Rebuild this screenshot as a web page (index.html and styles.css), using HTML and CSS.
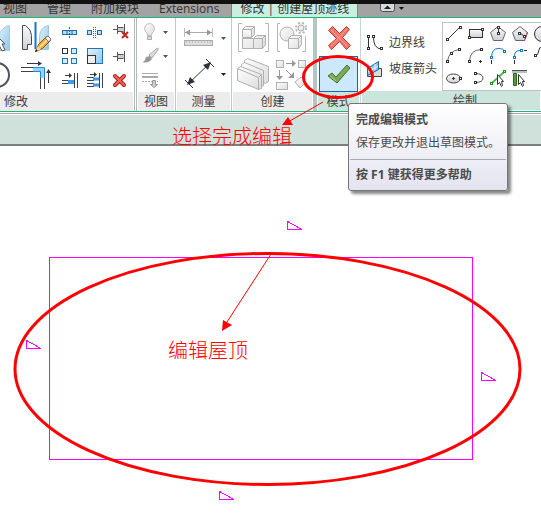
FILE: index.html
```html
<!DOCTYPE html>
<html lang="zh-CN">
<head>
<meta charset="utf-8">
<title>创建屋顶迹线</title>
<link rel="stylesheet" href="styles.css">
</head>
<body>
<svg class="defs" width="0" height="0" aria-hidden="true">
  <defs>
    <linearGradient id="grey" x1="0" y1="0" x2="1" y2="1"><stop offset="0" stop-color="#fff"/><stop offset="1" stop-color="#dcdcdc"/></linearGradient>
    <linearGradient id="blue" x1="0" y1="0" x2="1" y2="1"><stop offset="0" stop-color="#e4f3fc"/><stop offset="1" stop-color="#8fc6ea"/></linearGradient>
    <linearGradient id="steel" x1="0" y1="0" x2="0" y2="1"><stop offset="0" stop-color="#fafafa"/><stop offset="1" stop-color="#cdd0d6"/></linearGradient>
  </defs>
</svg>
<nav class="tabs">
  <a href="#view">视图</a>
  <a href="#manage">管理</a>
  <a href="#addins">附加模块</a>
  <a href="#ext">Extensions</a>
  <a href="#modify" class="active">修改 | 创建屋顶迹线</a>
  <button class="collapse" aria-label="最小化功能区">
    <svg width="24" height="12"><rect x="0.5" y="-3.500" width="14" height="11" rx="2" fill="#d8dadd" stroke="#4b4f58"/><path d="M4 5h7L7.500 1.500z" fill="#222"/><path d="M19 3h5l-2.500 3z" fill="#111"/></svg>
  </button>
</nav>

<div class="ribbon">
  <section class="panel modify">
    <div class="tools">
      <div class="halves cut">
        <button aria-label="镜像 - 拾取轴"><svg width="12" height="36"><path d="M-2 16Q3 6 9.500 5.500v25H-2z" fill="url(#blue)" stroke="#a8cbe2"/><path d="M-3 16L5 24H2l3 6-3 1-3-6-2 2z" fill="#fff" stroke="#555"/></svg></button>
        <button aria-label="旋转"><svg width="12" height="36"><circle cx="-3" cy="19" r="12" fill="none" stroke="#4d525c" stroke-width="2"/></svg></button>
      </div>
      <div class="halves wide">
        <button aria-label="镜像 - 绘制轴"><svg width="45" height="36"><path d="M10.500 5.500h3q6 4 6 10v9h-4v5h-5z" fill="url(#steel)" stroke="#444a55"/><path d="M36.500 5.500q-9 2-9 12v12h9z" fill="url(#blue)" stroke="#9cc5e0"/><path d="M23.500 2v27" stroke="#1673c5" stroke-width="2"/><path d="M23.500 31.500l3-7 8-8 4 4-8 8z" fill="#f5a52a" stroke="#91551a"/><path d="M28 27l8-8" stroke="#ffe18c" stroke-width="2"/><path d="M33 18l3-2 3 3-2 3z" fill="#eee" stroke="#777"/><path d="M23 32l3-6 3 3z" fill="#f4d7a8"/><path d="M23 32l1-3 2 2z" fill="#222"/></svg></button>
        <button aria-label="修剪/延伸为角"><svg width="45" height="36"><path d="M9 11.500h12M9 15.500h12M28.500 22v11M32.500 22v11" stroke="#3d434e"/><path d="M21 13.500h9.500V22" fill="none" stroke="#9bd0fb" stroke-width="4"/><path d="M21 11.500h11.500V22M21 15.500h7.500V22" fill="none" stroke="#2388e0"/><path d="M15 7.500h12M36.500 27V15" stroke="#333a46"/><path d="M26 5l4 2.500-4 2.500zM34 17l2.500-4 2.500 4z" fill="#333a46"/></svg></button>
      </div>
      <div class="thirds three">
        <button aria-label="拆分图元"><svg width="25" height="24"><rect x="5.500" y="10.500" width="14" height="4" fill="#b8e0f8" stroke="#1d6baa"/><path d="M10 10v5M15 10v5" stroke="#1d6baa"/><path d="M12.500 7v11" stroke="#d22" stroke-dasharray="2 1"/></svg></button>
        <button aria-label="用间隙拆分"><svg width="25" height="24"><rect x="5.500" y="10.500" width="4" height="4" fill="#b8e0f8" stroke="#1d6baa"/><rect x="15.500" y="10.500" width="4" height="4" fill="#b8e0f8" stroke="#1d6baa"/><path d="M11.500 7v11M13.500 7v11" stroke="#d22" stroke-dasharray="1 1"/></svg></button>
        <button aria-label="解锁"><svg width="25" height="24"><path d="M6 9.500h4M10.500 5v9M10.500 7.500h6M10.500 11.500h6M17.500 4v10" fill="none" stroke="#555"/><path d="M11 8h6v3h-6z" fill="#ccc"/><path d="M15 12l6 6M21 12l-6 6" stroke="#c9201c" stroke-width="2"/></svg></button>
        <button aria-label="阵列"><svg width="25" height="24" stroke="#1f76b6"><rect x="5.500" y="4.500" width="5" height="5" fill="#fff" stroke="#333"/><rect x="14.500" y="4.500" width="5" height="5" fill="#d3ebfa"/><rect x="5.500" y="14.500" width="5" height="5" fill="#d3ebfa"/><rect x="14.500" y="14.500" width="5" height="5" fill="#d3ebfa"/></svg></button>
        <button aria-label="缩放"><svg width="25" height="24"><rect x="5.500" y="4.500" width="15" height="15" fill="url(#blue)" stroke="#1f76b6"/><rect x="5.500" y="11.500" width="8" height="8" fill="#eee" stroke="#333"/></svg></button>
        <button aria-label="锁定"><svg width="25" height="24"><path d="M6 12.500h4M10.500 8v9M10.500 10.500h6M10.500 14.500h6M17.500 7v11" fill="none" stroke="#555"/><path d="M11 11h6v3h-6z" fill="#ccc"/></svg></button>
        <button aria-label="修剪单个图元"><svg width="25" height="24"><path d="M5 12.500h7M5 15.500h7M17.500 5v15M20.500 5v15M8 7.500h6" stroke="#3d434e"/><path d="M12 5l3 2.500-3 2.500z" fill="#333"/><path d="M11 14h6" stroke="#3b9cf0" stroke-width="4"/></svg></button>
        <button aria-label="修剪多个图元"><svg width="25" height="24"><path d="M5 9.500h7M5 12.500h7M5 15.500h7M5 18.500h7M17.500 5v15M20.500 5v15M8 6.500h6" stroke="#3d434e"/><path d="M12 4l3 2.500-3 2.500z" fill="#333"/><path d="M11 11h6M11 17h6" stroke="#3b9cf0" stroke-width="3"/></svg></button>
        <button aria-label="删除"><svg width="25" height="24"><path d="M8 8l9 9M17 8l-9 9" stroke="#a91f1c" stroke-width="4" stroke-linecap="round"/><path d="M8 8l9 9M17 8l-9 9" stroke="#ee6258" stroke-width="2" stroke-linecap="round"/></svg></button>
      </div>
    </div>
    <h2 class="start">修改</h2>
  </section>

  <section class="panel view">
    <div class="tools">
      <div class="thirds one">
        <button aria-label="隐藏图元"><svg width="36" height="24"><path d="M10.500 15.500q0-3-2-4-2-3 0-6 4-4 8 0 2 3 0 6-2 1-2 4z" fill="url(#grey)" stroke="#bbb"/><path d="M10.500 16.500h4v3h-4z" fill="#ddd" stroke="#aaa"/><path d="M26 11h5l-2.500 3z" fill="#555"/></svg></button>
        <button aria-label="替换图形"><svg width="36" height="24"><path d="M5 18q3 0 4-5l4-1 2 3q-4 5-10 3z" fill="#999"/><path d="M12 11l7-6 2-1v2l-6 8z" fill="#ddd" stroke="#aaa"/><path d="M26 11h5l-2.500 3z" fill="#555"/></svg></button>
        <button aria-label="线处理"><svg width="36" height="24"><path d="M5 5.500h16" stroke="#aaa"/><path d="M5 9h16" stroke="#aaa" stroke-width="2"/><path d="M5 13.500h16" stroke="#aaa" stroke-dasharray="2 1"/><path d="M15.500 12.500h3v4h2l-3.500 3-3.500-3h2z" fill="#ccc" stroke="#999"/></svg></button>
      </div>
    </div>
    <h2>视图</h2>
  </section>

  <section class="panel measure">
    <div class="tools">
      <div class="halves fill">
        <button aria-label="测量"><svg width="52" height="36"><path d="M6.500 8v9M34.500 8v9" stroke="#bbb"/><path d="M7 12.500h27" stroke="#aaa"/><path d="M7 12.500l5-3v6zM34 12.500l-5-3v6z" fill="#999"/><rect x="6.500" y="20.500" width="28" height="5" fill="#ddd" stroke="#aaa"/><path d="M8 22h25" stroke="#aaa" stroke-dasharray="1 2"/><path d="M43 17h5l-2.500 3z" fill="#555"/></svg></button>
        <button aria-label="对齐尺寸标注"><svg width="52" height="36"><path d="M10 28L32 7" stroke="#2c323d"/><path d="M7 24l8 8M28 3l8 8" stroke="#2c323d"/><path d="M9 29l3-8 5 5zM33 6l-8 3 5 5z" fill="#2c323d"/><path d="M43 17h5l-2.500 3z" fill="#222"/></svg></button>
      </div>
    </div>
    <h2>测量</h2>
  </section>

  <section class="panel create">
    <div class="tools">
      <div class="quarters">
        <button aria-label="创建零件"><svg width="40" height="36"><path d="M10 3.500H6.500v28H10M33 3.500h3.500v28H33" fill="none" stroke="#b5b5b5"/><g fill="url(#grey)" stroke="#b0b0b0"><path d="M10.500 9.500l3-3h9v8l-3 3h-9z"/><path d="M21.500 18.500l3-3h9v9l-3 4h-9zM10.500 18.500h11v10h-11zM21.500 18.500h9v10M10.500 9.500h9v8M19.500 9.500l3-3M30.500 18.500l3-3"/></g></svg></button>
        <button aria-label="创建组"><svg width="40" height="36"><path d="M8 3.500H5.500v28H8M30 31.500h3.500V16" fill="none" stroke="#b5b5b5"/><circle cx="15" cy="14" r="7" fill="url(#grey)" stroke="#b0b0b0"/><path d="M16.500 18.500l3-3h10v9l-3 4h-10zM16.500 18.500h10v10M26.500 18.500l3-3" fill="url(#grey)" stroke="#b0b0b0"/><circle cx="29" cy="8" r="5" fill="none" stroke="#b5b5b5" stroke-width="2" stroke-dasharray="2 2"/><circle cx="29" cy="8" r="3" fill="#eee" stroke="#aaa"/></svg></button>
        <button aria-label="创建部件"><svg width="40" height="36"><g fill="url(#grey)" stroke="#b0b0b0"><path d="M12.500 4.500l3-2 21 8v15l-3 2-21-10z"/><path d="M9.500 8.500l3-2 19 8v15l-3 1-19-9z"/><path d="M5.500 12.500l3-2 21 8v14l-3 1-21-9zM5.500 12.500l21 9v12M26.500 21.500l3-3"/></g></svg></button>
        <button aria-label="创建类似"><svg width="40" height="36"><g fill="url(#grey)" stroke="#b0b0b0"><rect x="4.500" y="4.500" width="7" height="7"/><rect x="26.500" y="4.500" width="7" height="7"/><rect x="4.500" y="26.500" width="11" height="7"/><path d="M23 26l6-5 5 5-6 6z"/></g><path d="M14 7.500h9M7.500 14v8M14 14l7 7" stroke="#999"/><path d="M20 4l4 3.500-4 3.500zM4 20l3.500 4 3.500-4zM22 16v6h-6z" fill="#999"/></svg></button>
      </div>
    </div>
    <h2>创建</h2>
  </section>

  <section class="panel mode">
    <div class="tools">
      <div class="halves fill">
        <button aria-label="取消编辑模式"><svg width="38" height="34"><path d="M8.500 9.500l4-4 7 7 7-7 3 3-7 8 8 8-4 4-7-8-8 8-3-4 8-7z" fill="#f3766b" stroke="#bd3a32"/><path d="M11 9l16 16M27 8L11 25" stroke="#fb9a8e"/></svg></button>
        <button class="done" aria-label="完成编辑模式"><svg width="36" height="32"><path d="M7 18l4-3 4 4L26 7l3 3-13 15z" fill="#7bac55" stroke="#46702c"/><path d="M9 18l6 5" stroke="#a9cc8a"/></svg></button>
      </div>
    </div>
    <h2>模式</h2>
  </section>

  <section class="panel draw">
    <div class="tools">
      <div class="choices">
        <button><svg width="18" height="18"><path d="M2.500 3v12M7.500 3q0 11 7 12" fill="none" stroke="#333"/><g fill="#fff" stroke="#333"><rect x="1.500" y="1.500" width="2" height="2"/><rect x="1.500" y="13.500" width="2" height="2"/><rect x="6.500" y="1.500" width="2" height="2"/><rect x="14.500" y="13.500" width="2" height="2"/></g></svg>边界线</button>
        <button><svg width="18" height="18"><path d="M1.500 8.500h14v8h-14z" fill="#ddd" stroke="#444"/><path d="M1.500 8.500l11-7v8l-11 6z" fill="#8cc8ef" stroke="#1667a3"/><path d="M2 12l10-6M5 7v6M9 4v6" stroke="#eaf6ff"/></svg>坡度箭头</button>
      </div>
      <div class="gallery">
        <button aria-label="直线"><svg width="22" height="22"><path d="M5 16L16 5" stroke="#333"/><g fill="#fff" stroke="#333"><rect x="3.500" y="15.500" width="2" height="2"/><rect x="16.500" y="3.500" width="2" height="2"/></g></svg></button>
        <button aria-label="矩形"><svg width="22" height="22"><rect x="4.500" y="6.500" width="13" height="8" fill="url(#steel)" stroke="#333"/><g fill="#fff" stroke="#333"><rect x="3.500" y="13.500" width="2" height="2"/><rect x="16.500" y="5.500" width="2" height="2"/></g></svg></button>
        <button aria-label="内接多边形"><svg width="22" height="22"><path d="M11 3.500l7.500 6-3 8h-9l-3-8z" fill="url(#steel)" stroke="#666"/><path d="M11.500 4v6" stroke="#333"/><g fill="#fff" stroke="#333"><rect x="10.500" y="3.500" width="2" height="2"/><rect x="10.500" y="9.500" width="2" height="2"/></g></svg></button>
        <button aria-label="外接多边形"><svg width="22" height="22"><path d="M11 3.500l7.500 6-3 8h-9l-3-8z" fill="url(#steel)" stroke="#666"/><path d="M18.500 9l-3 9" stroke="#e22" stroke-dasharray="3 1"/><path d="M11 10l4 3" stroke="#333"/><g fill="#fff" stroke="#333"><rect x="9.500" y="9.500" width="2" height="2"/><rect x="14.500" y="12.500" width="2" height="2"/></g></svg></button>
        <button aria-label="圆形"><svg width="22" height="22"><circle cx="11" cy="11" r="7.500" fill="url(#steel)" stroke="#333"/><rect x="10.500" y="10.500" width="2" height="2" fill="#fff" stroke="#333"/></svg></button>
        <button aria-label="起点-终点-半径弧"><svg width="22" height="22"><path d="M4.500 16Q6 6 16 4.500" fill="none" stroke="#666"/><g fill="#fff" stroke="#333"><rect x="3.500" y="15.500" width="2" height="2"/><rect x="7.500" y="7.500" width="2" height="2"/><rect x="15.500" y="3.500" width="2" height="2"/></g></svg></button>
        <button aria-label="圆心-端点弧"><svg width="22" height="22"><path d="M4.500 16Q5 5 16 4.500" fill="none" stroke="#666"/><path d="M14 16.500h3M15.500 15v3" stroke="#333"/><g fill="#fff" stroke="#333"><rect x="3.500" y="15.500" width="2" height="2"/><rect x="15.500" y="3.500" width="2" height="2"/></g></svg></button>
        <button aria-label="相切-端点弧"><svg width="22" height="22"><path d="M4.500 12Q5 3.500 11 3.500T17 6" fill="none" stroke="#1778c8"/><path d="M4.500 15v4" stroke="#333"/><g fill="#fff" stroke="#1778c8"><rect x="3.500" y="11.500" width="2" height="2"/><rect x="16.500" y="5.500" width="2" height="2"/></g></svg></button>
        <button aria-label="圆角弧"><svg width="22" height="22"><path d="M5.500 12Q5 5 12 5.500" fill="none" stroke="#1778c8"/><path d="M5.500 15v4M15 5.500h3" stroke="#333"/><g fill="#fff" stroke="#1778c8"><rect x="4.500" y="11.500" width="2" height="2"/><rect x="11.500" y="4.500" width="2" height="2"/></g></svg></button>
        <button aria-label="样条曲线"><svg width="22" height="22"><path d="M4 11q3 0 4-6t4 2 5 8" fill="none" stroke="#333"/><rect x="3.500" y="9.500" width="2" height="2" fill="#fff" stroke="#333"/></svg></button>
        <button aria-label="椭圆"><svg width="22" height="22"><ellipse cx="10.500" cy="11.500" rx="7" ry="4.500" fill="url(#steel)" stroke="#444"/><path d="M9 11.500h3M10.500 10v3" stroke="#333"/><rect x="16.500" y="10.500" width="2" height="2" fill="#fff" stroke="#333"/></svg></button>
        <button aria-label="半椭圆"><svg width="22" height="22"><path d="M10 6.500q8 0 8 4.500t-8 4.500" fill="none" stroke="#555"/><g fill="#fff" stroke="#333"><rect x="9.500" y="5.500" width="2" height="2"/><rect x="9.500" y="14.500" width="2" height="2"/></g></svg></button>
        <button aria-label="拾取线"><svg width="22" height="22"><path d="M5 16L17 5" stroke="#4bbf3b" stroke-width="2"/><g fill="#cfc" stroke="#1a921a"><rect x="3.500" y="15.500" width="2" height="2"/><rect x="16.500" y="3.500" width="2" height="2"/></g><path d="M10.500 7.500v10l2-2 2 4 1-1-1-4h2z" fill="#fff" stroke="#333"/></svg></button>
        <button aria-label="拾取墙"><svg width="22" height="22"><path d="M3 4.500h15" stroke="#b9bcc6" stroke-width="3"/><path d="M3 3.500h15" stroke="#4e5260"/><path d="M4.500 6.500h3v12h-3z" fill="#4f9f34" stroke="#286a18"/><path d="M9.500 7.500v10l2-2 2 4 1-1-1-4h2z" fill="#fff" stroke="#333"/></svg></button>
      </div>
    </div>
    <h2>绘制</h2>
  </section>
</div>
<div class="options"></div>

<aside class="tooltip" role="tooltip">
  <strong>完成编辑模式</strong>
  <p>保存更改并退出草图模式。</p>
  <footer>按 F1 键获得更多帮助</footer>
</aside>

<svg class="sketch">
  <g fill="none" stroke="#f0f" shape-rendering="crispEdges">
    <rect x="49.500" y="257.500" width="423" height="202"/>
    <path d="M287.500 221.500v8H302zM26.500 340.500v8H41zM219.500 491.500v8H234zM481.500 372.500v8H496z"/>
  </g>
  <g fill="none" stroke="red">
    <ellipse cx="267.500" cy="369" rx="252.500" ry="115.500" stroke-width="3"/>
    <ellipse cx="338" cy="77" rx="34.500" ry="20.500" stroke-width="3"/>
    <path d="M323 102L288 122M271 254L227 322"/>
  </g>
  <path d="M282 125l6-8 5 8zM222 331l1-11 9 5z" fill="red"/>
  <g class="notes">
    <text x="172" y="144">选择完成编辑</text>
    <text x="168" y="358">编辑屋顶</text>
  </g>
</svg>
</body>
</html>
```
FILE: styles.css
```css
* { box-sizing: border-box; }

body {
  margin: 0;
  min-height: 100vh;
  position: relative;
  overflow: hidden;
  background: #fff;
  color: #3c3c3c;
  font: 12px/16px "Open Sans", "Noto Sans CJK SC", sans-serif;
}

.defs { position: absolute; }

button {
  display: flex;
  align-items: center;
  justify-content: center;
  padding: 0;
  border: 0;
  background: none;
  color: inherit;
  font: inherit;
}

svg { display: block; flex: none; }

.tabs {
  display: flex;
  height: 18px;
  overflow: hidden;
  border-top: 4px solid #111;
  border-bottom: 1px solid #20b573;
  background: #a3a3a3;
  line-height: 10px;
  white-space: nowrap;
}

.tabs a {
  padding: 0 10px;
  color: #333;
  text-decoration: none;
}

.tabs a:first-child { padding-left: 3px; }

.tabs a.active {
  margin-left: 2px;
  padding: 0 8px;
  border-left: 1px solid #20b573;
  border-right: 1px solid #20b573;
  background: #c9efe1;
}

.collapse {
  align-self: flex-start;
  margin-left: 22px;
}

.ribbon {
  display: flex;
  height: 94px;
  border-bottom: 1px solid #20b573;
  background: #fff;
  overflow: hidden;
}

.panel {
  flex: none;
  display: flex;
  flex-direction: column;
  border-right: 1px solid #b7cdc5;
}

.tools {
  display: flex;
  height: 75px;
  padding-top: 2px;
}

h2 {
  flex: 1;
  margin: 0 1px 1px;
  background: #ececec;
  font-size: 12px;
  font-weight: 400;
  line-height: 19px;
  text-align: center;
}

h2.start {
  margin-left: 0;
  padding-left: 4px;
  text-align: left;
}

.halves {
  display: grid;
  grid-template-rows: 36px 36px;
}

.halves.cut { width: 12px; }
.halves.wide { width: 45px; }
.halves.fill { width: 100%; }

.thirds {
  display: grid;
  grid-template-rows: repeat(3, 24px);
}

.thirds.three {
  grid-template-columns: repeat(3, 25px);
  padding-right: 2px;
}

.thirds.one { width: 100%; }
.thirds.one button { justify-content: flex-start; }

.quarters {
  display: grid;
  grid-template: 36px 36px / 40px 40px;
}

.modify { border-right: 3px double #b0bcb7; }
.view { width: 39px; }
.measure { width: 56px; }

.create {
  width: 85px;
  border-right: 4px solid #b3c7c0;
}

.mode {
  width: 44px;
  border-right: 1px solid #c4d9d1;
}

.mode .fill { padding: 0 2px; }
.mode h2, .draw h2 { background: #cbe5dc; }

.done {
  border: 1px solid #1467b8;
  background: #cde8fb;
}

.draw {
  flex: 1;
  min-width: 0;
  border: 0;
}

.draw h2 { padding-left: 28px; }

.choices {
  display: flex;
  flex-direction: column;
  gap: 8px;
  width: 81px;
  flex: none;
  padding: 14px 0 0 5px;
}

.choices button {
  justify-content: flex-start;
  gap: 5px;
  height: 18px;
  white-space: nowrap;
}

.gallery {
  flex: 1;
  display: grid;
  grid-template-columns: repeat(5, 22px);
  grid-auto-rows: 22px;
  min-width: 0;
  height: 69px;
  margin-top: 2px;
  overflow: hidden;
  border: 1px solid #bfc4c2;
  border-right: 0;
}

.options {
  height: 33px;
  margin-top: 1px;
  border-top: 1px solid #a4a9a7;
  border-bottom: 2px solid #77807c;
  background: #d0e1db;
  box-shadow: inset 0 1px #fff;
}

.tooltip {
  position: absolute;
  top: 103px;
  left: 348px;
  width: 160px;
  padding: 8px 1px 7px;
  border: 1px solid #767676;
  border-radius: 3px;
  background: linear-gradient(#fff, #e3e4f0);
  box-shadow: 3px 3px 3px #0007;
  color: #4b4b4b;
  white-space: nowrap;
}

.tooltip strong, .tooltip p, .tooltip footer { padding: 0 6px; }

.tooltip strong { display: block; }

.tooltip p { margin: 7px 0 8px; }

.tooltip footer {
  padding-top: 7px;
  border-top: 1px solid #aaa;
  font-weight: 700;
}

.sketch {
  position: absolute;
  inset: 0;
  width: 100%;
  height: 100%;
  pointer-events: none;
}

.notes {
  fill: red;
  font: 300 20px "Noto Sans CJK SC", sans-serif;
}
```
